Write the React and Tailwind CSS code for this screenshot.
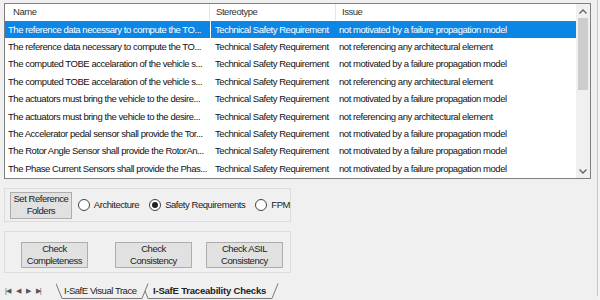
const rows = [
    ['The reference data necessary to compute the TO...', 'not motivated by a failure propagation model'],
    ['The reference data necessary to compute the TO...', 'not referencing any architectural element'],
    ['The computed TOBE accelaration of the vehicle s...', 'not motivated by a failure propagation model'],
    ['The computed TOBE accelaration of the vehicle s...', 'not referencing any architectural element'],
    ['The actuators must bring the vehicle to the desire...', 'not motivated by a failure propagation model'],
    ['The actuators must bring the vehicle to the desire...', 'not referencing any architectural element'],
    ['The Accelerator pedal sensor shall provide the Tor...', 'not motivated by a failure propagation model'],
    ['The Rotor Angle Sensor shall provide the RotorAn...', 'not motivated by a failure propagation model'],
    ['The Phase Current Sensors shall provide the Phas...', 'not motivated by a failure propagation model'],
];

function WinButton({children, className}) {
    return (
        <div className={'flex items-center justify-center text-center whitespace-nowrap leading-[12px] bg-[#e1e1e1] border border-[#adadad] text-[#222] ' + className}>
            <div>{children}</div>
        </div>
    );
}

function Radio({checked, label}) {
    return (
        <div className="flex items-center gap-[4px] whitespace-nowrap">
            <div className="w-[12px] h-[12px] rounded-full border border-[#444] bg-white flex items-center justify-center">
                {checked && <div className="w-[6px] h-[6px] rounded-full bg-[#222]"/>}
            </div>
            <span>{label}</span>
        </div>
    );
}

export default function App() {
    return (
        <div
            className="w-[600px] h-[300px] bg-[#f0f0f0] overflow-hidden flex text-[9.5px] tracking-[-0.45px] text-[#1a1a1a]"
            style={{fontFamily: '"Liberation Sans", Arial, sans-serif'}}
        >
            <div className="w-[597px] flex flex-col pl-[4px] pt-[3px]">
                {/* list view */}
                <div className="w-[587px] h-[176px] border border-[#7f7f7f] bg-white flex">
                    <div className="w-[571px] flex flex-col">
                        <div className="h-[17px] flex items-center text-[#333] border-b border-white">
                            <div className="w-[205px] h-full pl-[8px] flex items-center border-r border-[#e5e5e5]">Name</div>
                            <div className="w-[126px] h-full pl-[6px] flex items-center border-r border-[#e5e5e5]">Stereotype</div>
                            <div className="flex-1 pl-[6px]">Issue</div>
                        </div>
                        {rows.map((row, i) => (
                            <div
                                key={i}
                                className={'h-[17.4px] flex items-center whitespace-nowrap ' + (i === 0 ? 'bg-[#0c86e4] text-white' : 'text-[#111]')}
                            >
                                <div className="w-[205px] pl-[3px] overflow-hidden">{row[0]}</div>
                                <div className={'w-[126px] pl-[4px] h-full flex items-center overflow-hidden border-l ' + (i === 0 ? 'border-white' : 'border-transparent')}>Technical Safety Requirement</div>
                                <div className="flex-1 pl-[3px]">{row[1]}</div>
                            </div>
                        ))}
                    </div>
                    <div className="w-[14px] bg-[#f0f0f0] flex flex-col items-center">
                        <div className="h-[14px] flex items-center justify-center text-[#606060]">
                            <svg width="8" height="5" viewBox="0 0 8 5"><path d="M0.5 4.5L4 1L7.5 4.5" stroke="currentColor" strokeWidth="1.3" fill="none"/></svg>
                        </div>
                        <div className="w-[10px] h-[72px] bg-[#cdcdcd]"/>
                        <div className="flex-1"/>
                        <div className="h-[14px] flex items-center justify-center text-[#606060]">
                            <svg width="8" height="5" viewBox="0 0 8 5"><path d="M0.5 0.5L4 4L7.5 0.5" stroke="currentColor" strokeWidth="1.3" fill="none"/></svg>
                        </div>
                    </div>
                </div>

                {/* reference folders group */}
                <div className="mt-[9px] w-[287px] h-[34px] border border-[#dcdcdc] flex items-center gap-[6px] pl-[5px]">
                    <WinButton className="w-[67px] h-[27px]">Set Reference<br/>Folders</WinButton>
                    <div className="flex items-center gap-[10px]">
                        <Radio label="Architecture"/>
                        <Radio checked label="Safety Requirements"/>
                        <Radio label="FPM"/>
                    </div>
                </div>

                {/* checks group */}
                <div className="mt-[9px] w-[287px] h-[42px] border border-[#dcdcdc] flex items-end pb-[4px] pl-[16px] gap-[27px]">
                    <WinButton className="w-[67px] h-[26px]">Check<br/>Completeness</WinButton>
                    <div className="flex gap-[14px]">
                        <WinButton className="w-[77px] h-[26px]">Check<br/>Consistency</WinButton>
                        <WinButton className="w-[77px] h-[26px]">Check ASIL<br/>Consistency</WinButton>
                    </div>
                </div>

                {/* sheet tabs */}
                <div className="mt-[10px] h-[16px] flex items-center text-[#222]">
                    <div className="flex items-center gap-[6px] text-[7px] text-[#555] pl-[1px] w-[52px] tracking-[-1px]">
                        <span>|◀</span><span>◀</span><span>▶</span><span>▶|</span>
                    </div>
                    <div className="relative h-[16px] flex whitespace-nowrap">
                        <svg className="absolute left-0 top-0" width="224" height="16" viewBox="0 0 224 16">
                            <path d="M0 0.5L6 15.5H86L92 0.5" stroke="#7a7a7a" fill="none"/>
                            <path d="M89 8L92 15.5H216L222 0.5" stroke="#7a7a7a" fill="none"/>
                        </svg>
                        <div className="pl-[8px] w-[94px] pt-[1px]">I-SafE Visual Trace</div>
                        <div className="pl-[3px] pt-[1px] font-bold tracking-[-0.2px]">I-SafE Traceability Checks</div>
                    </div>
                </div>
            </div>
            <div className="w-[1px] h-[296px] bg-[#c8c8c8]"/>
            <div className="flex-1 bg-[#f4f4f4]"/>
        </div>
    );
}
